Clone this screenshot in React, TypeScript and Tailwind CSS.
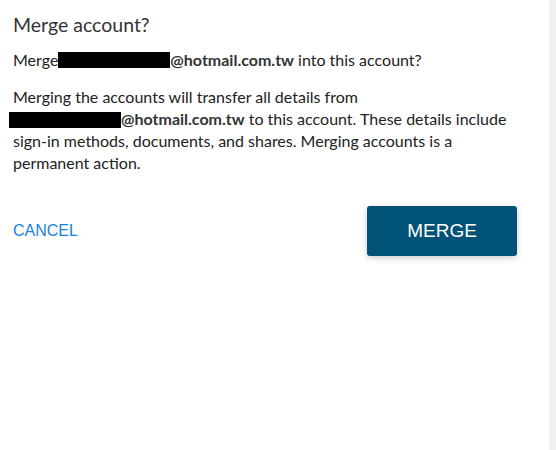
import React from "react";

export default function App() {
  return (
    <div className="flex w-[556px] h-[450px] bg-white overflow-hidden">
      <div className="w-[549px] h-full bg-white pl-[13px] pr-[32px] pt-[13px] font-['Lato','Liberation_Sans',sans-serif] text-[#222]">
        <h1 className="text-[19.5px] leading-[24px] text-[#333] font-normal">Merge account?</h1>
        <p className="mt-[12px] text-[16px] leading-[22px] flex items-center">
          <span>Merge</span>
          <span className="inline-block w-[112px] h-[16px] bg-black"></span>
          <span className="font-bold text-[#333]">@hotmail.com.tw</span>
          <span>&nbsp;into this account?</span>
        </p>
        <p className="mt-[15px] text-[16px] leading-[22px] w-[500px]">
          Merging the accounts will transfer all details from
          <br />
          <span className="inline-block w-[112px] h-[16px] bg-black align-[-3px] ml-[-4px]"></span>
          <span className="font-bold text-[#333]">@hotmail.com.tw</span> to this account. These details include sign-in methods, documents, and shares. Merging accounts is a permanent action.
        </p>
        <div className="mt-[32px] flex items-center justify-between">
          <button className="font-['Liberation_Sans',Arial,sans-serif] text-[16px] text-[#1a82e2] leading-none">CANCEL</button>
          <button className="w-[150px] h-[50px] rounded-[3px] bg-[#005276] text-white font-['Liberation_Sans',Arial,sans-serif] text-[19px] shadow-[0_2px_6px_rgba(0,0,0,0.2)]">
            MERGE
          </button>
        </div>
      </div>
      <div className="flex-1 h-full bg-[#eef0f2]"></div>
    </div>
  );
}
